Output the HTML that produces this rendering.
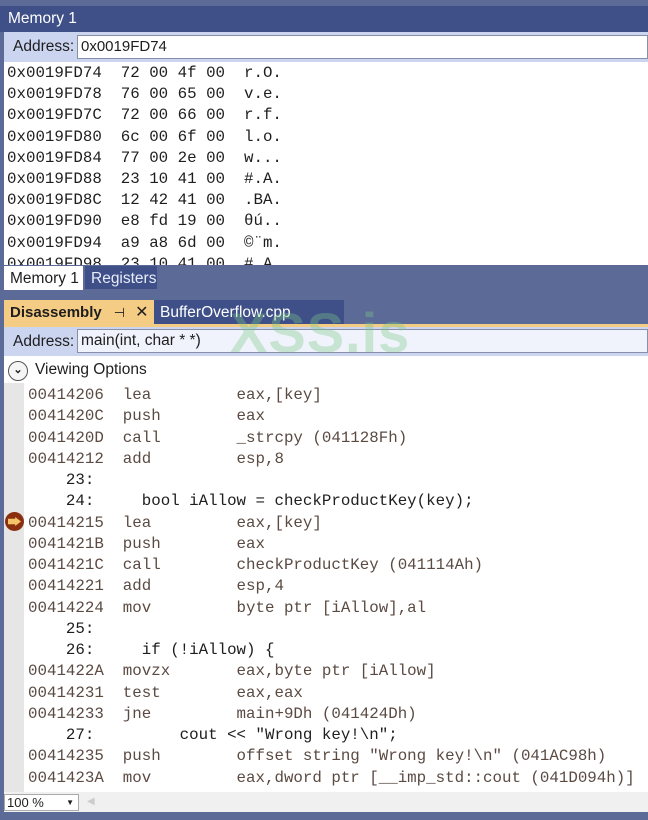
<!DOCTYPE html>
<html><head><style>
*{margin:0;padding:0;box-sizing:border-box}
body{width:648px;height:820px;background:#5c6a98;position:relative;overflow:hidden;font-family:"Liberation Sans",sans-serif}
.abs{position:absolute}
.mono{font-family:"Liberation Mono","DejaVu Sans Mono",monospace;font-size:15.8px;white-space:pre;color:#1e1e1e}
</style></head><body>
<div class="abs" style="left:0;top:6px;width:648px;height:26px;background:#3f5089;color:#fff;font-size:15.5px;line-height:26px;padding-left:8px">Memory 1</div>
<div class="abs" style="left:4px;top:32px;width:644px;height:30px;background:#ccd5f0"></div>
<div class="abs" style="left:13px;top:38px;font-size:15.5px;color:#1e1e1e">Address:</div>
<div class="abs" style="left:77px;top:35px;width:571px;height:24px;background:#fff;border:1px solid #8890a8;font-size:15px;line-height:22px;padding-left:3px;color:#1e1e1e">0x0019FD74</div>
<div class="abs mono" style="left:4px;top:62px;width:644px;height:203px;background:#fff;overflow:hidden;padding-left:3px;line-height:21.2px;padding-top:1px">0x0019FD74  72 00 4f 00  r.O.
0x0019FD78  76 00 65 00  v.e.
0x0019FD7C  72 00 66 00  r.f.
0x0019FD80  6c 00 6f 00  l.o.
0x0019FD84  77 00 2e 00  w...
0x0019FD88  23 10 41 00  #.A.
0x0019FD8C  12 42 41 00  .BA.
0x0019FD90  e8 fd 19 00  θú..
0x0019FD94  a9 a8 6d 00  ©¨m.
0x0019FD98  23 10 41 00  #.A.</div>
<div class="abs" style="left:4px;top:266px;width:79px;height:24px;background:#fff;font-size:15.5px;line-height:25px;padding-left:6px;color:#1e1e1e">Memory 1</div>
<div class="abs" style="left:85px;top:266px;width:72px;height:23px;background:#3f5089;font-size:15.5px;line-height:25px;padding-left:6px;color:#e8ecf8">Registers</div>
<div class="abs" style="left:4px;top:300px;width:150px;height:25px;background:#f5cc84;font-size:15px;font-weight:bold;line-height:25px;padding-left:6px;color:#1e1e1e">Disassembly<span style="font-weight:normal;margin-left:12px;font-size:13px">⊣</span><span style="font-weight:normal;margin-left:10px;font-size:16px">✕</span></div>
<div class="abs" style="left:154px;top:300px;width:190px;height:24px;background:#3f5089;font-size:15.5px;line-height:25px;padding-left:6px;color:#fff">BufferOverflow.cpp</div>
<div class="abs" style="left:4px;top:324px;width:644px;height:3px;background:#f5cc84"></div>
<div class="abs" style="left:4px;top:327px;width:644px;height:29px;background:#ccd5f0"></div>
<div class="abs" style="left:13px;top:333px;font-size:15.5px;color:#1e1e1e">Address:</div>
<div class="abs" style="left:77px;top:329px;width:571px;height:24px;background:#f0f3fc;border:1px solid #8890a8;font-size:15.5px;line-height:22px;padding-left:3px;color:#1e1e1e">main(int, char * *)</div>
<div class="abs" style="left:230px;top:300px;font-size:56px;font-weight:bold;color:rgba(120,200,130,0.35);letter-spacing:1px">XSS.is</div>
<div class="abs" style="left:4px;top:356px;width:644px;height:436px;background:#fff"></div>
<div class="abs" style="left:8px;top:361px;width:20px;height:20px;border:1.5px solid #555;border-radius:50%;background:#f5f5f5;font-size:11px;line-height:17px;text-align:center;color:#222;font-weight:bold">⌄</div>
<div class="abs" style="left:35px;top:361px;font-size:15.5px;color:#1e1e1e">Viewing Options</div>
<div class="abs" style="left:4px;top:383px;width:20px;height:409px;background:#e6e6e6"></div>
<div class="abs" style="left:5px;top:512px;width:19px;height:19px;border-radius:50%;background:#8a2f10"></div>
<div class="abs" style="left:8px;top:517px;width:13px;height:9px;background:#f5c46a;clip-path:polygon(0 20%,55% 20%,55% 0,100% 50%,55% 100%,55% 80%,0 80%)"></div>
<div class="abs mono" style="left:28px;top:385px;line-height:21.25px;color:#5a4a42">00414206  lea         eax,[key]
0041420C  push        eax
0041420D  call        _strcpy (041128Fh)
00414212  add         esp,8
<span style="color:#1e1e1e">    23: 
    24:     bool iAllow = checkProductKey(key);</span>
00414215  lea         eax,[key]
0041421B  push        eax
0041421C  call        checkProductKey (041114Ah)
00414221  add         esp,4
00414224  mov         byte ptr [iAllow],al
<span style="color:#1e1e1e">    25: 
    26:     if (!iAllow) {</span>
0041422A  movzx       eax,byte ptr [iAllow]
00414231  test        eax,eax
00414233  jne         main+9Dh (041424Dh)
<span style="color:#1e1e1e">    27:         cout &lt;&lt; "Wrong key!\n";</span>
00414235  push        offset string "Wrong key!\n" (041AC98h)
0041423A  mov         eax,dword ptr [__imp_std::cout (041D094h)]</div>
<div class="abs" style="left:4px;top:792px;width:644px;height:20px;background:#f0f0f0"></div>
<div class="abs" style="left:4px;top:794px;width:75px;height:17px;background:#fff;border:1px solid #aaa;font-size:13px;line-height:15px;padding-left:2px;color:#1e1e1e">100 %<span style="position:absolute;right:4px;font-size:8px">▼</span></div>
<div class="abs" style="left:87px;top:796px;font-size:10px;color:#ccc">◀</div>
</body></html>
